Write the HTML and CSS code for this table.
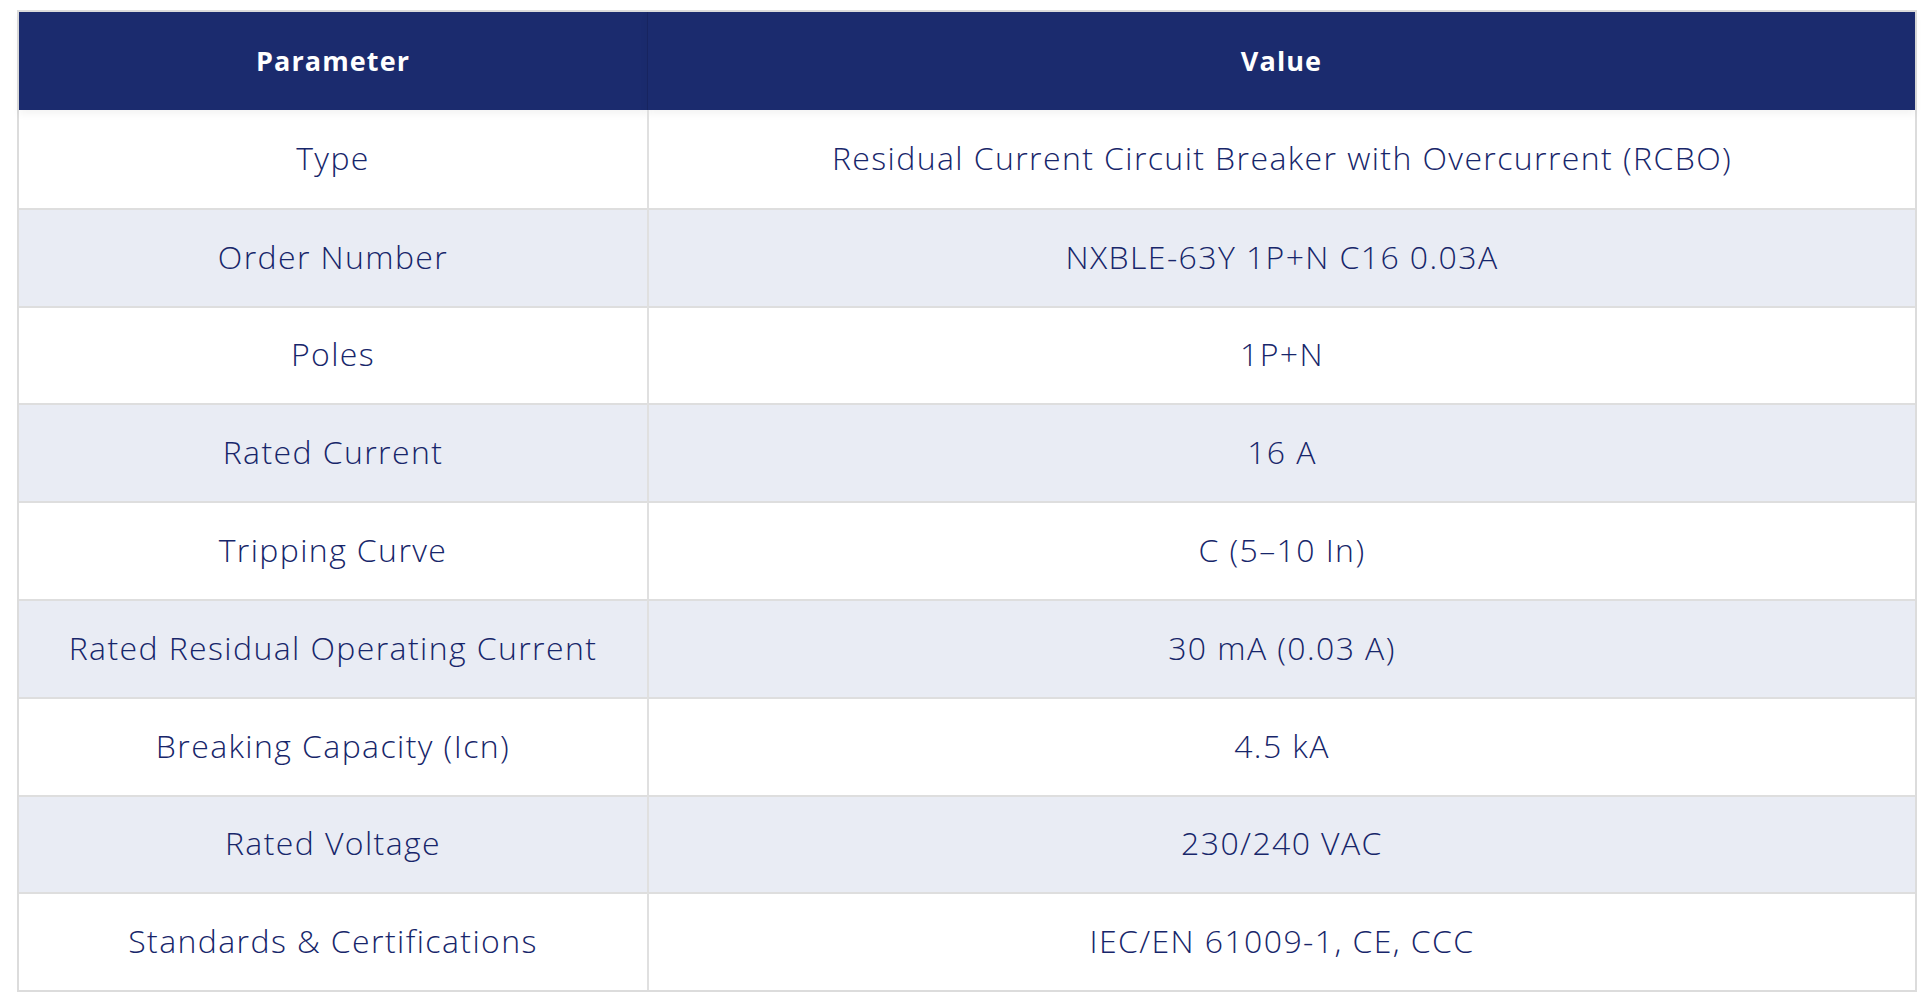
FILE: index.html
```html
<!DOCTYPE html>
<html lang="en">
<head>
<meta charset="utf-8">
<title>RCBO Specifications</title>
<link rel="stylesheet" href="styles.css">
</head>
<body>
<div class="page">
  <table class="spec-table">
    <thead>
      <tr>
        <th class="col-param">Parameter</th>
        <th class="col-value">Value</th>
      </tr>
    </thead>
    <tbody>
      <tr><td class="col-param">Type</td><td class="col-value">Residual Current Circuit Breaker with Overcurrent (RCBO)</td></tr>
      <tr><td class="col-param">Order Number</td><td class="col-value">NXBLE-63Y 1P+N C16 0.03A</td></tr>
      <tr><td class="col-param">Poles</td><td class="col-value">1P+N</td></tr>
      <tr><td class="col-param">Rated Current</td><td class="col-value">16 A</td></tr>
      <tr><td class="col-param">Tripping Curve</td><td class="col-value">C (5–10 In)</td></tr>
      <tr><td class="col-param">Rated Residual Operating Current</td><td class="col-value">30 mA (0.03 A)</td></tr>
      <tr><td class="col-param">Breaking Capacity (Icn)</td><td class="col-value">4.5 kA</td></tr>
      <tr><td class="col-param">Rated Voltage</td><td class="col-value">230/240 VAC</td></tr>
      <tr><td class="col-param">Standards &amp; Certifications</td><td class="col-value">IEC/EN 61009-1, CE, CCC</td></tr>
    </tbody>
  </table>
</div>
</body>
</html>
```

FILE: styles.css
```css
html, body {
  margin: 0;
  padding: 0;
  background: #ffffff;
}

.page {
  padding: 10px 15px 8px 17px;
  font-family: "Open Sans", "Liberation Sans", sans-serif;
}

.spec-table {
  width: 1900px;
  border-collapse: separate;
  border-spacing: 0;
  border: 2px solid #dcdcdc;
  table-layout: fixed;
  color: #17266a;
}

.spec-table .col-param {
  width: 628px;
}

.spec-table thead tr {
  height: 98px;
}

.spec-table th {
  background: #1b2b6e;
  color: #ffffff;
  font-size: 27px;
  font-weight: 700;
  letter-spacing: 1.1px;
  padding: 0 0 2px;
  text-align: center;
  vertical-align: middle;
  box-shadow: 0 4px 8px rgba(0, 0, 0, 0.05);
}

.spec-table th.col-value {
  border-left: 1px solid #172460;
}

.spec-table tbody tr {
  height: 97.8px;
}

.spec-table td {
  font-size: 32px;
  font-weight: 300;
  letter-spacing: 1.4px;
  padding: 0 0 3px;
  text-align: center;
  vertical-align: middle;
  border-top: 2px solid #dedede;
}

.spec-table tbody tr:first-child td {
  border-top: none;
}

.spec-table td.col-value {
  border-left: 2px solid #e0e0e0;
}

.spec-table tbody tr:nth-child(even) td {
  background: #e9ecf4;
}
```
